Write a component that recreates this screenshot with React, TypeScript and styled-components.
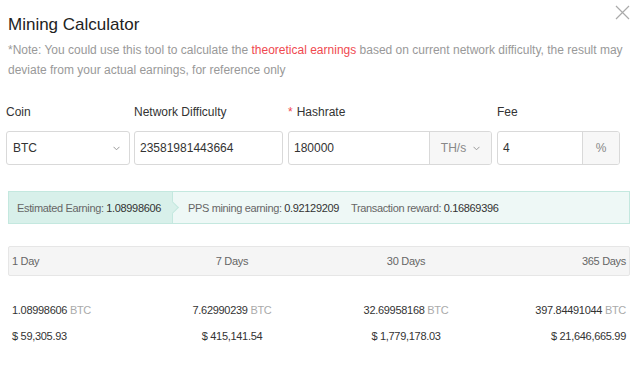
import React from "react";
import styled, { createGlobalStyle } from "styled-components";

const GlobalStyle = createGlobalStyle`
    html, body {
        margin: 0;
        padding: 0;
        background: #fff;
        font-family: "Liberation Sans", Arial, sans-serif;
    }
`;

const Modal = styled.div`
    position: relative;
    width: 640px;
    height: 379px;
    box-sizing: border-box;
    padding: 0 10px 0 8px;
    background: #fff;
    color: #333;
`;

const CloseButton = styled.button`
    position: absolute;
    top: 5px;
    right: 10px;
    width: 15px;
    height: 15px;
    padding: 0;
    border: none;
    background: none;
    cursor: pointer;
`;

const Title = styled.h2`
    margin: 0;
    padding-top: 13px;
    font-size: 17px;
    line-height: 24px;
    font-weight: normal;
    color: #222;
`;

const Note = styled.p`
    margin: 3px 0 0;
    font-size: 12px;
    line-height: 20px;
    color: #999;
`;

const Highlight = styled.span`
    color: #f0494f;
`;

const FormRow = styled.div`
    display: flex;
    margin: 24px 0 0 -2px;
`;

const Field = styled.div<{ $width: number; $gap?: number }>`
    width: ${props => props.$width}px;
    margin-right: ${props => props.$gap ?? 0}px;
    display: flex;
    flex-direction: column;
`;

const Label = styled.label`
    font-size: 12px;
    line-height: 16px;
    height: 16px;
    color: #333;
    margin-bottom: 11px;
`;

const Required = styled.span`
    color: #f0494f;
    margin-right: 4px;
`;

const Box = styled.div`
    display: flex;
    height: 34px;
    box-sizing: border-box;
    border: 1px solid #d9d9d9;
    border-radius: 3px;
    overflow: hidden;
`;

const Value = styled.div`
    flex: 1;
    display: flex;
    align-items: center;
    padding: 0 5px;
    font-size: 12px;
    color: #333;
`;

const Addon = styled.div<{ $width: number }>`
    width: ${props => props.$width}px;
    display: flex;
    align-items: center;
    justify-content: center;
    gap: 7px;
    background: #f7f7f7;
    border-left: 1px solid #d9d9d9;
    font-size: 12px;
    color: #888;
`;

const Chevron = ({ color = "#999" }: { color?: string }) => (
    <svg width="7" height="5" viewBox="0 0 7 5">
        <path d="M0.5 0.8 L3.5 3.8 L6.5 0.8" fill="none" stroke={color} strokeWidth="1" />
    </svg>
);

const SelectValue = styled(Value)`
    justify-content: space-between;
    padding: 0 9px 0 6px;
`;

const Banner = styled.div`
    display: flex;
    align-items: stretch;
    height: 33px;
    margin-top: 26px;
    box-sizing: border-box;
    border: 1px solid #c4e8df;
    background: #eef8f6;
    font-size: 11px;
    letter-spacing: -0.35px;
    color: #666;
`;

const BannerLead = styled.div`
    position: relative;
    display: flex;
    align-items: center;
    width: 164px;
    padding-left: 8px;
    box-sizing: border-box;
    background: #d8f0ea;
    border-right: 1px solid #c4e8df;

    &::after {
        content: "";
        position: absolute;
        right: -5px;
        top: 50%;
        width: 8px;
        height: 8px;
        margin-top: -5px;
        background: #d8f0ea;
        border-top: 1px solid #c4e8df;
        border-right: 1px solid #c4e8df;
        transform: rotate(45deg);
    }
`;

const BannerItem = styled.div<{ $first?: boolean }>`
    display: flex;
    align-items: center;
    padding-left: ${props => (props.$first ? 15 : 12)}px;
`;

const Strong = styled.span`
    color: #333;
`;

const Table = styled.div`
    margin-top: 22px;
`;

const Grid = styled.div`
    display: grid;
    grid-template-columns: 1fr 174px 174px 1fr;
    padding: 0 4px;
    letter-spacing: -0.3px;
    & > :nth-child(1) {
        text-align: left;
    }
    & > :nth-child(2),
    & > :nth-child(3) {
        text-align: center;
    }
    & > :nth-child(4) {
        text-align: right;
    }
`;

const HeadRow = styled(Grid)`
    height: 30px;
    align-items: center;
    box-sizing: border-box;
    border: 1px solid #e6e6e6;
    border-radius: 2px;
    padding: 0 3px;
    background: #f5f5f5;
    font-size: 11px;
    color: #666;
`;

const Body = styled.div`
    padding-top: 21px;
`;

const BodyRow = styled(Grid)`
    height: 26px;
    align-items: center;
    font-size: 11px;
    color: #333;
`;

const Unit = styled.span`
    color: #aaa;
`;

const periods = ["1 Day", "7 Days", "30 Days", "365 Days"];
const btc = ["1.08998606", "7.62990239", "32.69958168", "397.84491044"];
const usd = ["$ 59,305.93", "$ 415,141.54", "$ 1,779,178.03", "$ 21,646,665.99"];

const App = () => (
    <>
        <GlobalStyle />
        <Modal>
            <CloseButton aria-label="close">
                <svg width="15" height="15" viewBox="0 0 15 15">
                    <path d="M1 1 L14 14 M14 1 L1 14" stroke="#aaa" strokeWidth="1.2" />
                </svg>
            </CloseButton>
            <Title>Mining Calculator</Title>
            <Note>
                *Note: You could use this tool to calculate the <Highlight>theoretical earnings</Highlight> based on
                current network difficulty, the result may deviate from your actual earnings, for reference only
            </Note>

            <FormRow>
                <Field $width={124} $gap={4}>
                    <Label>Coin</Label>
                    <Box>
                        <SelectValue>
                            BTC
                            <Chevron />
                        </SelectValue>
                    </Box>
                </Field>
                <Field $width={149} $gap={5}>
                    <Label>Network Difficulty</Label>
                    <Box>
                        <Value>23581981443664</Value>
                    </Box>
                </Field>
                <Field $width={204} $gap={5}>
                    <Label>
                        <Required>*</Required>Hashrate
                    </Label>
                    <Box>
                        <Value>180000</Value>
                        <Addon $width={61}>
                            TH/s
                            <Chevron />
                        </Addon>
                    </Box>
                </Field>
                <Field $width={123}>
                    <Label>Fee</Label>
                    <Box>
                        <Value>4</Value>
                        <Addon $width={36}>%</Addon>
                    </Box>
                </Field>
            </FormRow>

            <Banner>
                <BannerLead>
                    Estimated Earning:&nbsp;<Strong>1.08998606</Strong>
                </BannerLead>
                <BannerItem $first>
                    PPS mining earning:&nbsp;<Strong>0.92129209</Strong>
                </BannerItem>
                <BannerItem>
                    Transaction reward:&nbsp;<Strong>0.16869396</Strong>
                </BannerItem>
            </Banner>

            <Table>
                <HeadRow>
                    {periods.map(p => (
                        <div key={p}>{p}</div>
                    ))}
                </HeadRow>
                <Body>
                    <BodyRow>
                        {btc.map(v => (
                            <div key={v}>
                                {v} <Unit>BTC</Unit>
                            </div>
                        ))}
                    </BodyRow>
                    <BodyRow>
                        {usd.map(v => (
                            <div key={v}>{v}</div>
                        ))}
                    </BodyRow>
                </Body>
            </Table>
        </Modal>
    </>
);

export default App;
